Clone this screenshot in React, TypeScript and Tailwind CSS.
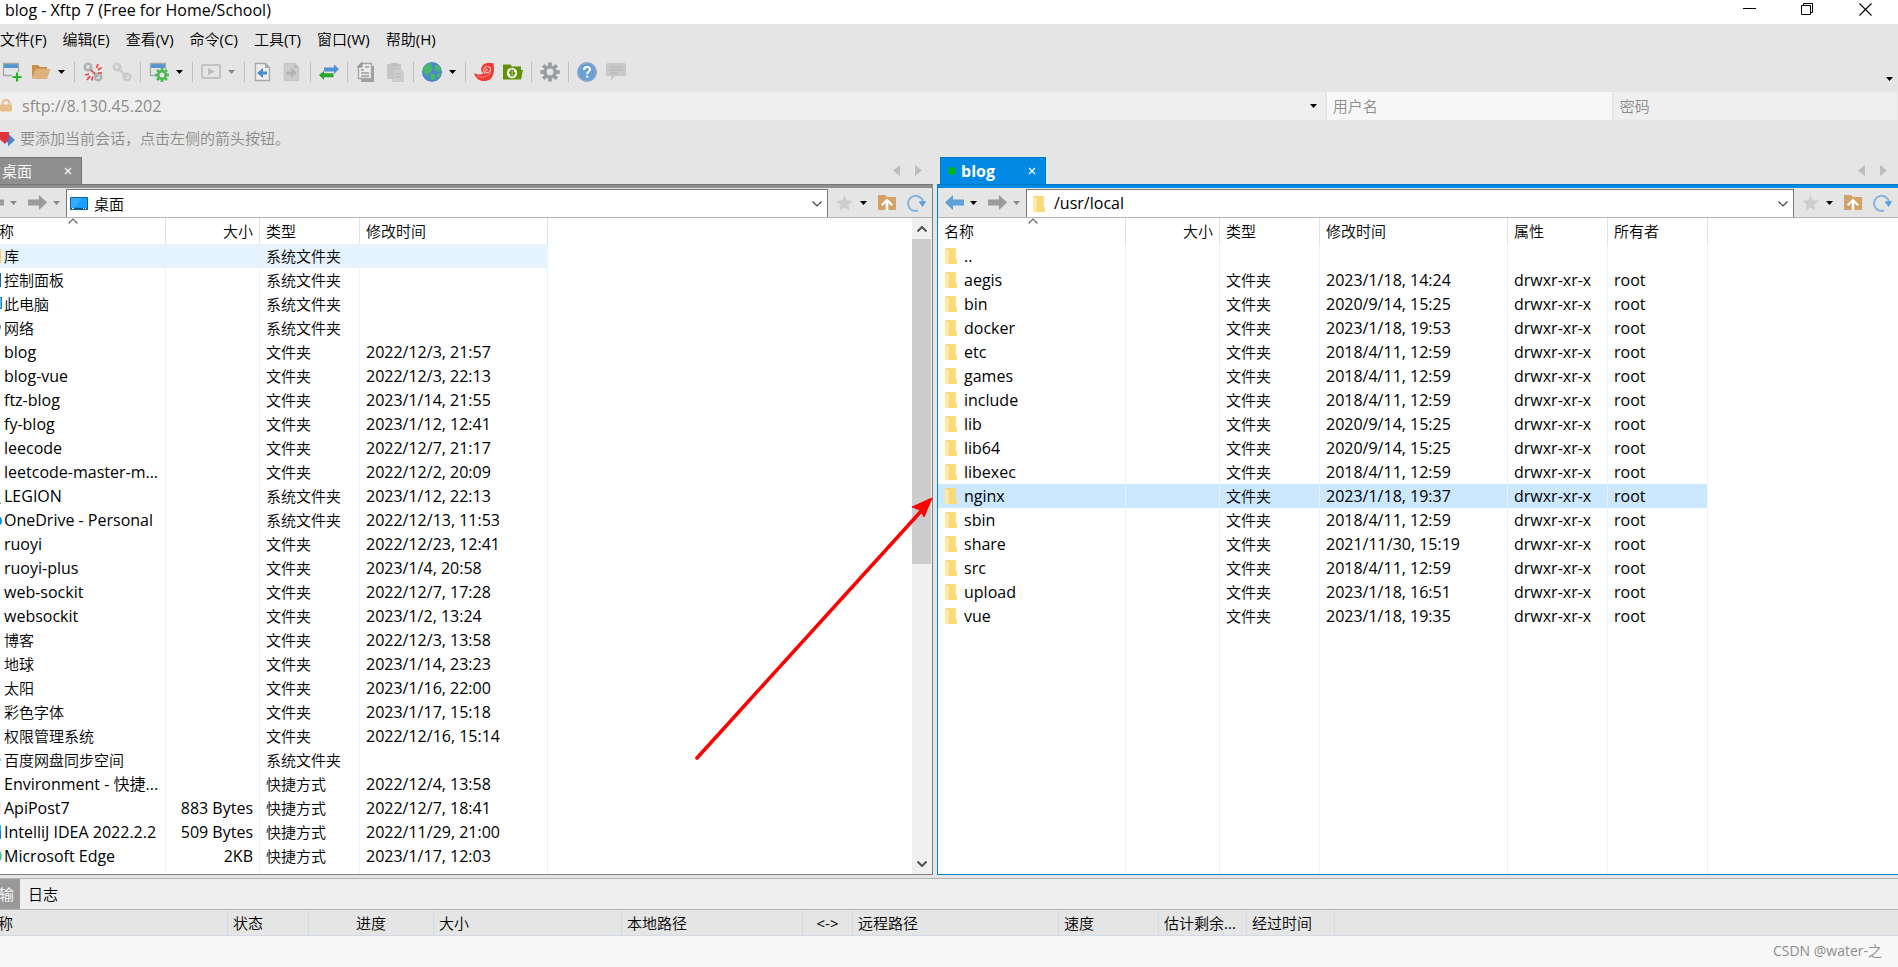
import type { ReactNode } from "react";

type Kind =
  | "folder" | "library" | "control" | "computer" | "network" | "user"
  | "cloud" | "disk" | "file" | "api" | "idea" | "edge";

type Entry = {
  name: string;
  kind?: Kind;
  size?: string;
  type?: string;
  time?: string;
  attr?: string;
  owner?: string;
};

const local: Entry[] = [
  { name: "库", kind: "library", type: "系统文件夹" },
  { name: "控制面板", kind: "control", type: "系统文件夹" },
  { name: "此电脑", kind: "computer", type: "系统文件夹" },
  { name: "网络", kind: "network", type: "系统文件夹" },
  { name: "blog", type: "文件夹", time: "2022/12/3, 21:57" },
  { name: "blog-vue", type: "文件夹", time: "2022/12/3, 22:13" },
  { name: "ftz-blog", type: "文件夹", time: "2023/1/14, 21:55" },
  { name: "fy-blog", type: "文件夹", time: "2023/1/12, 12:41" },
  { name: "leecode", type: "文件夹", time: "2022/12/7, 21:17" },
  { name: "leetcode-master-m...", type: "文件夹", time: "2022/12/2, 20:09" },
  { name: "LEGION", kind: "user", type: "系统文件夹", time: "2023/1/12, 22:13" },
  { name: "OneDrive - Personal", kind: "cloud", type: "系统文件夹", time: "2022/12/13, 11:53" },
  { name: "ruoyi", type: "文件夹", time: "2022/12/23, 12:41" },
  { name: "ruoyi-plus", type: "文件夹", time: "2023/1/4, 20:58" },
  { name: "web-sockit", type: "文件夹", time: "2022/12/7, 17:28" },
  { name: "websockit", type: "文件夹", time: "2023/1/2, 13:24" },
  { name: "博客", type: "文件夹", time: "2022/12/3, 13:58" },
  { name: "地球", type: "文件夹", time: "2023/1/14, 23:23" },
  { name: "太阳", type: "文件夹", time: "2023/1/16, 22:00" },
  { name: "彩色字体", type: "文件夹", time: "2023/1/17, 15:18" },
  { name: "权限管理系统", type: "文件夹", time: "2022/12/16, 15:14" },
  { name: "百度网盘同步空间", kind: "disk", type: "系统文件夹" },
  { name: "Environment - 快捷...", kind: "file", type: "快捷方式", time: "2022/12/4, 13:58" },
  { name: "ApiPost7", kind: "api", size: "883 Bytes", type: "快捷方式", time: "2022/12/7, 18:41" },
  { name: "IntelliJ IDEA 2022.2.2", kind: "idea", size: "509 Bytes", type: "快捷方式", time: "2022/11/29, 21:00" },
  { name: "Microsoft Edge", kind: "edge", size: "2KB", type: "快捷方式", time: "2023/1/17, 12:03" },
];

const dir = (name: string, time: string): Entry => ({
  name, time, type: "文件夹", attr: "drwxr-xr-x", owner: "root",
});

const remote: Entry[] = [
  { name: ".." },
  dir("aegis", "2023/1/18, 14:24"),
  dir("bin", "2020/9/14, 15:25"),
  dir("docker", "2023/1/18, 19:53"),
  dir("etc", "2018/4/11, 12:59"),
  dir("games", "2018/4/11, 12:59"),
  dir("include", "2018/4/11, 12:59"),
  dir("lib", "2020/9/14, 15:25"),
  dir("lib64", "2020/9/14, 15:25"),
  dir("libexec", "2018/4/11, 12:59"),
  dir("nginx", "2023/1/18, 19:37"),
  dir("sbin", "2018/4/11, 12:59"),
  dir("share", "2021/11/30, 15:19"),
  dir("src", "2018/4/11, 12:59"),
  dir("upload", "2023/1/18, 16:51"),
  dir("vue", "2023/1/18, 19:35"),
];

const hasHan = (s: string) => /^[\u4e00-\u9fff]+$/.test(s);
const textSize = (s: string) => (hasHan(s) ? "text-[15px]" : "text-[16px]");

/* ---------- icons ---------- */

function Svg({ w = 20, h = 20, children }: { w?: number; h?: number; children: ReactNode }) {
  return (
    <svg width={w} height={h} viewBox={`0 0 ${w} ${h}`} fill="none" className="block shrink-0" aria-hidden="true">
      {children}
    </svg>
  );
}

const Caret = ({ color = "#000" }: { color?: string }) => (
  <Svg w={7} h={4}><path d="M0 0h7L3.5 4z" fill={color} /></Svg>
);

const FolderGlyph = () => (
  <>
    <path d="M3 2h10.500v11.500h1.500V18H3z" fill="#f6d274" />
    <path d="M7 2h6.500v11.500H15V18H7z" fill="#f9d978" />
    <path d="M3 2.500L6.800 4v13.500L5.500 19 3 17.500z" fill="#ffe9a6" />
  </>
);

function EntryIcon({ kind = "folder" }: { kind?: Kind }) {
  return (
    <Svg>
      {kind === "folder" && <FolderGlyph />}
      {kind === "library" && <><path d="M3 4h16v13H3z" fill="#ffcf48" /><path d="M3 14h15v3H3z" fill="#3b9be8" /></>}
      {kind === "control" && <><path d="M3 3h16v14H3z" fill="#1668a8" /><path d="M5 5h11v9H5z" fill="#6fc3f7" /></>}
      {kind === "computer" && <><path d="M2 3h18v12H2z" fill="#2c7fc4" /><path d="M3 4h16v10H3z" fill="#5bbcf5" /><path d="M7 17h8v1H7z" fill="#777" /></>}
      {kind === "network" && <><circle cx="14" cy="9" r="5" fill="#5f8a8f" /><path d="M3 5h10v8H3z" fill="#5bbcf5" /></>}
      {kind === "user" && <><circle cx="11" cy="7" r="4" fill="#7fb59a" /><path d="M3 18c2-8 14-8 16 0z" fill="#5b9c7c" /></>}
      {kind === "cloud" && <path d="M5 15a4 4 0 010-7 5 5 0 019-1 4 4 0 012 8z" fill="#1590df" stroke="#1590df" strokeWidth="2" />}
      {kind === "disk" && <><circle cx="7" cy="10" r="4" stroke="#2fb5f0" strokeWidth="3" /><path d="M11 10h8" stroke="#58d4e8" strokeWidth="2" /></>}
      {kind === "file" && <path d="M4.500 2.500h9v15h-9z" fill="#fff" stroke="#aaa" />}
      {kind === "api" && <rect x="2" y="2" width="17" height="16" rx="3" fill="#fde3da" />}
      {kind === "idea" && <><path d="M2 4h17v13H2z" fill="#087cfa" /><path d="M4 6h11v10H4z" fill="#111" /><path d="M17 3h2v5h-2z" fill="#21b8f0" /></>}
      {kind === "edge" && <><circle cx="11" cy="10" r="8.500" fill="#1f7fc9" /><path d="M11 2a8.500 8.500 0 018 11c-3 1-5-2-8-2z" fill="#54c95c" /></>}
    </Svg>
  );
}

const NewSession = () => (
  <Svg>
    <path d="M1 1h16v5H1z" fill="#5596d2" />
    <path d="M10 13.500H1.500v-12h15V10" stroke="#a5a9ac" strokeWidth="1.300" />
    <path d="M15 10.500v9M10.500 15h9" stroke="#28b428" strokeWidth="2.200" />
  </Svg>
);
const OpenFolder = () => (
  <Svg>
    <path d="M1 3h6l2 2h7v3H5l-4 8z" fill="#c98f4b" />
    <path d="M5 7h14.500L16 17H1z" fill="#dfb27c" />
  </Svg>
);
const LinkShape = ({ c }: { c: string }) => (
  <>
    <circle cx="5" cy="5" r="3.200" stroke={c} strokeWidth="2.600" />
    <circle cx="15" cy="15" r="3.200" stroke={c} strokeWidth="2.600" />
    <path d="M6 6l3 3M11 11l4 4" stroke={c} strokeWidth="3" />
  </>
);
const Disconnect = () => (
  <Svg>
    <LinkShape c="#b0b3b5" />
    <path d="M13.500 6l1.500-4M15 8l3.500-2.500M15 11h4M6 12l-4 1M7 14l-3 4M9.500 14.500l-.5 4M8 8l4 4" stroke="#ef4444" strokeWidth="1.700" />
  </Svg>
);
const Reconnect = () => (
  <Svg><LinkShape c="#cbcbcb" /><path d="M6 6l9 9" stroke="#cbcbcb" strokeWidth="2.400" /></Svg>
);
const Gear = ({ x, y, r, c, hole }: { x: number; y: number; r: number; c: string; hole: string }) => (
  <g>
    {[0, 45, 90, 135].map((a) => (
      <path key={a} d={`M${x - r} ${y}h${r * 2}`} stroke={c} strokeWidth={r / 2.6} transform={`rotate(${a} ${x} ${y})`} />
    ))}
    <circle cx={x} cy={y} r={r * 0.7} fill={c} />
    <circle cx={x} cy={y} r={r * 0.36} fill={hole} />
  </g>
);
const Properties = () => (
  <Svg>
    <path d="M1 1h16v5H1z" fill="#5596d2" />
    <path d="M8 13.500H1.500v-12h15V7" stroke="#a5a9ac" strokeWidth="1.300" />
    <Gear x={13} y={13} r={7} c="#4db84d" hole="#e5e5e5" />
  </Svg>
);
const Play = () => (
  <Svg><rect x="1" y="3" width="18" height="13" rx="1" stroke="#c3c3c3" strokeWidth="2" /><path d="M7 6l7 3.500L7 13z" fill="#bdbdbd" /></Svg>
);
const PageArrow = ({ left }: { left: boolean }) => (
  <Svg>
    <path d="M2.500 1.500h10l4 4v13h-14z" fill={left ? "#eeeeee" : "#cdcdcd"} stroke={left ? "#a7abae" : "#c6c6c6"} strokeWidth="1.400" />
    <path d="M12 1v5h5z" fill={left ? "#a7abae" : "#bdbdbd"} />
    {left
      ? <path d="M4 11l6-5v3.500h4v3h-4V16z" fill="#4c8bd0" />
      : <path d="M15 11l-6-5v3.500H4v3h5V16z" fill="#b3b3b3" />}
  </Svg>
);
const Swap = () => (
  <Svg>
    <path d="M20 7l-5-4.500v3H5v4h10v2.500z" fill="#4f92d6" />
    <path d="M0 13l5-4v2.300h9.500v4H5V18z" fill="#2ba52b" />
  </Svg>
);
const Copy = () => (
  <Svg>
    <path d="M6 4h12v16H5v-3h11V4z" fill="#9da2a8" />
    <path d="M5 1.500h10.500v15h-13V4z" fill="#ededed" stroke="#a2a6a9" strokeWidth="1.300" />
    <path d="M2 5l4-4v4zM5 8h3M5 11h8M5 14h8M9 5h4" fill="#999" stroke="#989b9e" strokeWidth="1.300" />
  </Svg>
);
const Paste = () => (
  <Svg>
    <path d="M2 2h14v15H2z" fill="#c6c6c6" /><path d="M6 1h6v3H6z" fill="#bbb" />
    <path d="M8 7h7l3 3v10H8z" fill="#cfcfcf" stroke="#c0c0c0" /><path d="M10 12h6M10 15h6" stroke="#b8b8b8" strokeWidth="1.200" />
  </Svg>
);
const Globe = () => (
  <Svg>
    <circle cx="10" cy="10" r="10" fill="#4d87cb" />
    <path d="M2 5l5-4 3 1-1 3 2 2-2 3-3 1 1 2-2 1-3-3-1-3z" fill="#45b963" />
    <path d="M13 3l4 1 2 4-3 2-3-2zM8 12l4 0 2 2-2 4-3 0z" fill="#45b963" />
    <path d="M16 11l3 0-2 5-2-2z" fill="#45b963" />
  </Svg>
);
const Shell = () => (
  <Svg>
    <path d="M0 11c4 2 7 2 9.500 0C7 10 6.500 7 8 4.500 10 1 15 0 19.500 1.500 20.500 8 20 13 17 16.500 11 21.500 2 19 0 11z" fill="#f4382f" />
    <path d="M13.800 8c-.8-1.200-2.500-.2-2.200 1.200.5 2.500 5 1.500 5-2 0-2.500-3.500-3.700-5.700-1.500-2 2-1.500 5 .5 6" stroke="#fbd4d0" strokeWidth="1.100" />
    <path d="M3 14c5 2 10 1 14-3" stroke="#fbb5b0" strokeWidth=".8" />
  </Svg>
);
const XftpFolder = () => (
  <Svg>
    <path d="M0 2.500h7.500l1.500 2h9V8h2l-2 9.500H0z" fill="#5f9208" />
    <circle cx="9" cy="11" r="5.200" fill="#fff" />
    <path d="M8 14.500V9l-1.800 2.500M10.200 7.500V13l1.800-2.500" stroke="#5f9208" strokeWidth="1.700" />
  </Svg>
);
const Help = () => (
  <Svg>
    <circle cx="10" cy="10" r="9.300" fill="#6b9fd6" stroke="#85a9cf" strokeWidth="1.400" />
    <path d="M7 8c0-4 6-4 6-.5 0 2-2.800 2-2.800 4.500M10.200 13.500v2.200" stroke="#fff" strokeWidth="2" />
  </Svg>
);
const Chat = () => (
  <Svg>
    <path d="M2 1h16a2 2 0 012 2v9a2 2 0 01-2 2H9l-4 5v-5H2a2 2 0 01-2-2V3a2 2 0 012-2z" fill="#c8c8c8" />
    <path d="M4 5h12M4 8h12M4 11h8" stroke="#bababa" strokeWidth="1.300" />
  </Svg>
);

const Arrow = ({ left, color }: { left?: boolean; color: string }) => (
  <Svg w={19} h={15}>
    {left
      ? <path d="M0 7.500L8 0v4.500h11v6H8V15z" fill={color} />
      : <path d="M19 7.500L11 0v4.500H0v6h11V15z" fill={color} />}
  </Svg>
);
const Star = () => (
  <Svg w={17} h={16}><path d="M8.500 0l2.300 5.300 6 .5-4.500 4 1.300 6-5.100-3.200-5.100 3.200 1.300-6-4.500-4 6-.5z" fill="#cdcdcd" /></Svg>
);
const UpFolder = () => (
  <Svg w={18} h={17}>
    <path d="M0 1h7l2 2h9v13H0z" fill="#d3a267" />
    <path d="M9 4.500l6 6-1.500 1.500L10.300 9v7H7.700V9l-3.200 3L3 10.500z" fill="#fff" />
  </Svg>
);
const Refresh = () => (
  <Svg w={19} h={18}>
    <path d="M11 16.500A7.500 7.500 0 1116 8" stroke="#86b4dd" strokeWidth="2" />
    <path d="M12 7.500l7 0-3.300 5z" fill="#5b9fdc" />
    <path d="M12 8l3.500 5 3.500-6z" fill="#5b9fdc" />
  </Svg>
);
const Chevron = ({ up, size = 10, color = "#444", weight = 1.2 }: { up?: boolean; size?: number; color?: string; weight?: number }) => (
  <svg width={size} height={size * 0.6} viewBox="0 0 10 6" fill="none" className="block" aria-hidden="true">
    <path d={up ? "M.5 5.500L5 1l4.500 4.500" : "M.5.500L5 5 9.500.500"} stroke={color} strokeWidth={weight} />
  </svg>
);
const Monitor = () => (
  <Svg w={18} h={13}>
    <path d="M.5.500h17v12H.5z" fill="#1a9fff" stroke="#0b63a5" />
    <path d="M1 1h12L4 11H1z" fill="#36acff" />
    <path d="M1 11.500h16" stroke="#0b4f88" strokeWidth="1.200" /><path d="M2 11.500h2M13 11.500h1M15 11.500h1" stroke="#fff" />
  </Svg>
);

/* ---------- toolbar ---------- */

function Tool({ label, menu, muted, children }: { label: string; menu?: boolean; muted?: boolean; children: ReactNode }) {
  return (
    <button
      aria-label={label}
      className={menu ? "flex h-7 w-11 shrink-0 items-center gap-[7px] pl-[5px]" : "flex h-7 w-[29px] shrink-0 items-center justify-center"}
    >
      {children}
      {menu && <Caret color={muted ? "#8a8a8a" : "#000"} />}
    </button>
  );
}
const Sep = () => (
  <span className="flex w-2 shrink-0 justify-center"><span className="h-5 w-px bg-[#bfbfbf]" /></span>
);

function Toolbar() {
  return (
    <div className="flex h-[35px] items-center pr-[5px] pb-[5px]">
      <div className="-ml-[3px] flex flex-1 items-center">
        <Tool label="新建"><NewSession /></Tool>
        <Tool label="打开" menu><OpenFolder /></Tool>
        <Sep />
        <Tool label="断开"><Disconnect /></Tool>
        <Tool label="重新连接"><Reconnect /></Tool>
        <Sep />
        <Tool label="属性" menu><Properties /></Tool>
        <Sep />
        <Tool label="运行" menu muted><Play /></Tool>
        <Sep />
        <Tool label="下载"><PageArrow left /></Tool>
        <Tool label="上传"><PageArrow left={false} /></Tool>
        <Sep />
        <Tool label="同步"><Swap /></Tool>
        <Sep />
        <Tool label="复制"><Copy /></Tool>
        <Tool label="粘贴"><Paste /></Tool>
        <Sep />
        <Tool label="编码" menu><Globe /></Tool>
        <Sep />
        <Tool label="Xshell"><Shell /></Tool>
        <Tool label="Xftp"><XftpFolder /></Tool>
        <Sep />
        <Tool label="选项"><Svg><Gear x={10} y={10} r={9.6} c="#9a9da0" hole="#e5e5e5" /></Svg></Tool>
        <Sep />
        <Tool label="帮助"><Help /></Tool>
        <Tool label="反馈"><Chat /></Tool>
      </div>
      <button aria-label="更多工具" className="self-end pb-[6px]"><Caret /></button>
    </div>
  );
}

/* ---------- file panel ---------- */

const headings = ["名称", "大小", "类型", "修改时间", "属性", "所有者"];
const colWidths = ["w-[188px]", "w-[94px]", "w-[100px]", "w-[188px]", "w-[100px]", "w-[100px]"];

function FileTable({ rows, columns, selected, selectedClass }: { rows: Entry[]; columns: number; selected: number; selectedClass: string }) {
  const cell = "border-r border-[#e8f2fb] p-0 whitespace-nowrap";
  const cols = headings.slice(0, columns);
  return (
    <table className={`h-full table-fixed border-separate border-spacing-0 ${columns === 4 ? "w-[570px]" : "w-[770px]"}`}>
      <colgroup>
        {cols.map((h, i) => <col key={h} className={colWidths[i]} />)}
      </colgroup>
      <thead>
        <tr className="h-[26px]">
          {cols.map((h, i) => (
            <th
              key={h}
              scope="col"
              className={`relative border-r border-[#e2e2e2] px-[6px] text-[15px] font-normal ${i === 1 ? "text-right" : "text-left"}`}
            >
              {i === 0 && <span className="absolute top-0 left-[90px]"><Chevron up color="#666" /></span>}
              {h}
            </th>
          ))}
        </tr>
      </thead>
      <tbody>
        {rows.map((r, n) => (
          <tr key={r.name} className={n === selected ? `h-6 ${selectedClass}` : "h-6"}>
            <td className={`${cell} ${textSize(r.name)}`}>
              <span className="flex h-6 items-center gap-[2px] pl-1 leading-6">
                <EntryIcon kind={r.kind} />{r.name}
              </span>
            </td>
            {[r.size, r.type, r.time, r.attr, r.owner].slice(0, columns - 1).map((v, i) => (
              <td key={i} className={`${cell} px-[6px] leading-6 ${i === 0 ? "text-right" : ""} ${textSize(v ?? "")}`}>{v}</td>
            ))}
          </tr>
        ))}
        <tr>
          {cols.map((h) => <td key={h} className={cell} />)}
        </tr>
      </tbody>
    </table>
  );
}

function PanelTabs({ title, active }: { title: string; active: boolean }) {
  return (
    <div className="flex h-[27px] items-center pl-[3px]">
      <div
        className={
          active
            ? "flex h-full w-[106px] items-center border-x border-t border-[#0078c8] bg-[#008ae6] pr-[9px] pl-[7px] text-white"
            : "flex h-full w-[101px] items-center border-x border-t border-[#777] bg-[#8f8f8f] pr-[9px] pl-[7px] text-white"
        }
      >
        <span className={active ? "size-2 rounded-full bg-[#00b41e]" : "size-2"} />
        <button className={active ? "flex-1 pl-[5px] text-left text-[16px] leading-6 font-bold" : "flex-1 pl-[5px] text-left text-[15px] leading-6"}>{title}</button>
        <button aria-label={`关闭 ${title}`}>
          <Svg w={8} h={8}><path d="M1 1l6 6M7 1L1 7" stroke="#fff" strokeWidth="1.100" /></Svg>
        </button>
      </div>
      <div className="ml-auto flex items-center gap-[15px] pr-[11px]">
        <button aria-label="上一个标签"><Svg w={7} h={11}><path d="M7 0v11L0 5.500z" fill="#bdbdbd" /></Svg></button>
        <button aria-label="下一个标签"><Svg w={7} h={11}><path d="M0 0v11l7-5.500z" fill="#bdbdbd" /></Svg></button>
      </div>
    </div>
  );
}

function PathBar({ path, label, icon, back }: { path: string; label: string; icon: ReactNode; back: string }) {
  return (
    <div className="flex h-[30px] items-center border-b border-[#b4b4b4] bg-[#e5e5e5] pr-[6px] pl-[7px]">
      <div className="flex w-[81px] shrink-0 items-center gap-[6px]">
        <button aria-label={`${label}后退`}><Arrow left color={back} /></button>
        <button aria-label={`${label}后退历史`}><Caret color={back === "#5f9fd8" ? "#000" : "#8a8a8a"} /></button>
        <button aria-label={`${label}前进`} className="pl-[5px]"><Arrow color="#9c9c9c" /></button>
        <button aria-label={`${label}前进历史`}><Caret color="#8a8a8a" /></button>
      </div>
      <div className="mt-px flex h-7 flex-1 items-center self-start border-x border-t border-[#777] bg-white pr-[5px] pl-[3px]">
        <span className="flex w-6 shrink-0 items-center">{icon}</span>
        <input
          aria-label={label}
          defaultValue={path}
          className={`h-6 min-w-0 flex-1 bg-transparent pb-px outline-none ${textSize(path)}`}
        />
        <button aria-label={`${label}列表`}><Chevron /></button>
      </div>
      <div className="flex shrink-0 items-center pl-2">
        <button aria-label={`${label}收藏`}><Star /></button>
        <button aria-label={`${label}收藏列表`} className="pl-[7px]"><Caret /></button>
        <button aria-label={`${label}上级目录`} className="pl-[11px]"><UpFolder /></button>
        <button aria-label={`${label}刷新`} className="pl-[11px]"><Refresh /></button>
      </div>
    </div>
  );
}

/* ---------- transfer queue ---------- */

const queue: { title: string; className: string }[] = [
  { title: "名称", className: "w-[250px] text-left" },
  { title: "状态", className: "w-[81px] text-left" },
  { title: "进度", className: "w-[125px] text-center" },
  { title: "大小", className: "w-[188px] text-left" },
  { title: "本地路径", className: "w-[181px] text-left" },
  { title: "<->", className: "w-[50px] text-center" },
  { title: "远程路径", className: "w-[206px] text-left" },
  { title: "速度", className: "w-[100px] text-left" },
  { title: "估计剩余...", className: "w-[88px] text-left" },
  { title: "经过时间", className: "w-[88px] text-left" },
];

const menus = ["文件(F)", "编辑(E)", "查看(V)", "命令(C)", "工具(T)", "窗口(W)", "帮助(H)"];

export default function App() {
  return (
    <div className="flex h-screen min-h-[640px] flex-col overflow-hidden bg-[#e5e5e5] font-['Open_Sans','Noto_Sans_CJK_SC_DemiLight','Noto_Sans_CJK_SC_Light','Noto_Sans_CJK_SC',sans-serif] text-black">
      <header className="flex h-6 shrink-0 items-start bg-white pr-[26px] pl-[5px]">
        <h1 className="flex-1 text-[16px] leading-5">blog - Xftp 7 (Free for Home/School)</h1>
        <div className="flex gap-[45px] pt-[3px]">
          <button aria-label="最小化"><Svg w={13} h={13}><path d="M0 5.500h13" stroke="#000" /></Svg></button>
          <button aria-label="还原"><Svg w={13} h={13}><path d="M.5 2.500h9v9h-9zM2.500 2.500v-2h9v9h-2" stroke="#000" /></Svg></button>
          <button aria-label="关闭"><Svg w={13} h={13}><path d="M.5.500l12 12M12.500.500l-12 12" stroke="#000" strokeWidth="1.100" /></Svg></button>
        </div>
      </header>

      <nav className="flex h-[33px] shrink-0 items-center gap-4 pb-[2px] text-[15px]">
        {menus.map((m) => <button key={m}>{m}</button>)}
      </nav>

      <Toolbar />

      <div className="grid h-7 shrink-0 grid-cols-[minmax(0,1324fr)_minmax(0,285fr)_minmax(0,283fr)] gap-[2px] pr-px text-[#8c8c8c]">
        <div className="flex items-center bg-[#efefef] pr-2">
          <Svg w={12} h={14}>
            <path d="M2.500 7V4.500a3.500 3.500 0 017 0V7" stroke="#e6be8b" strokeWidth="2" />
            <rect x="0" y="5.500" width="12" height="7" rx="1" fill="#e6be8b" />
          </Svg>
          <input aria-label="主机地址" defaultValue="sftp://8.130.45.202" className="ml-[10px] min-w-0 flex-1 bg-transparent text-[16px] outline-none" />
          <button aria-label="主机列表"><Caret /></button>
        </div>
        <input aria-label="用户名" placeholder="用户名" className="bg-[#f7f7f7] px-[6px] text-[15px] outline-none placeholder:text-[#8c8c8c]" />
        <input aria-label="密码" type="password" placeholder="密码" className="bg-[#efefef] px-[6px] text-[15px] outline-none placeholder:text-[#8c8c8c]" />
      </div>

      <div className="flex h-[37px] shrink-0 items-center gap-[5px] text-[15px] text-[#8c8c8c]">
        <Svg w={15} h={18}>
          <path d="M4 7.500h4V3.500l7 6.500-7 6.500v-4H4z" fill="#4a86cb" />
          <path d="M0 2h9v7L5 13.500 0 16z" fill="#e2333b" />
          <path d="M0 9.500L4 13v5H0z" fill="#e5e5e5" />
        </Svg>
        <p>要添加当前会话，点击左侧的箭头按钮。</p>
      </div>

      <main className="relative flex min-h-0 flex-1 gap-1">
        <section aria-label="本地文件" className="relative flex min-w-0 flex-[933] flex-col overflow-hidden">
          <div className="-ml-[22px] flex min-h-0 flex-1 flex-col">
            <PanelTabs title="桌面" active={false} />
            <div className="border-t border-[#777] bg-[#8f8f8f] pt-[3px]" />
            <div className="flex min-h-0 flex-1 flex-col border-r border-b border-[#808080]">
              <PathBar path="桌面" label="本地路径" icon={<Monitor />} back="#9c9c9c" />
              <div className="flex min-h-0 flex-1 bg-white">
                <div className="min-w-0 flex-1 overflow-hidden">
                  <FileTable rows={local} columns={4} selected={0} selectedClass="bg-[#e5f3ff]" />
                </div>
                <div className="flex w-5 shrink-0 flex-col bg-[#f0f0f0] pr-px">
                  <button aria-label="向上滚动" className="flex h-[21px] items-center justify-center"><Chevron up color="#505050" weight={2} /></button>
                  <div className="min-h-0 flex-1"><div className="h-[53%] bg-[#cdcdcd]" /></div>
                  <button aria-label="向下滚动" className="flex h-[21px] items-center justify-center"><Chevron color="#505050" weight={2} /></button>
                </div>
              </div>
            </div>
          </div>
          <svg className="pointer-events-none absolute top-[340px] right-0 h-[264px] w-[240px]" viewBox="0 0 240 264" aria-hidden="true">
            <path d="M4 261L230 12" stroke="#ff0000" strokeWidth="3.600" strokeLinecap="round" />
            <path d="M239 1l-8 19-4-7-8-3z" fill="#ff0000" stroke="#ff0000" />
          </svg>
        </section>

        <section aria-label="远程文件" className="flex min-w-0 flex-[961] flex-col">
          <PanelTabs title="blog" active />
          <div className="border-t border-[#0078c8] bg-[#008ae6] pt-[3px]" />
          <div className="flex min-h-0 flex-1 flex-col border-b border-l border-[#0083d6]">
            <PathBar path="/usr/local" label="远程路径" icon={<Svg><FolderGlyph /></Svg>} back="#5f9fd8" />
            <div className="min-h-0 flex-1 overflow-hidden bg-white">
              <FileTable rows={remote} columns={6} selected={10} selectedClass="bg-[#cce8ff]" />
            </div>
          </div>
        </section>
      </main>

      <footer className="mt-[3px] shrink-0 border-t border-[#b4b4b4] bg-[#f7f7f7]">
        <div className="flex h-[30px] bg-[#efefef] text-[15px]">
          <button className="-ml-[22px] w-[42px] bg-[#999] text-white">传输</button>
          <button className="px-2">日志</button>
        </div>
        <div className="h-[27px] border-y border-t-[#b4b4b4] border-b-[#d3dae4] bg-[#e5e5e5]">
          <table className="-ml-[22px] h-full w-[1357px] table-fixed border-separate border-spacing-0 text-[15px] leading-5">
            <thead>
              <tr>
                {queue.map((q) => (
                  <th key={q.title} scope="col" className={`border-r border-[#d0dcea] px-[5px] py-0 font-normal whitespace-nowrap ${q.className}`}>{q.title}</th>
                ))}
              </tr>
            </thead>
          </table>
        </div>
        <p className="h-[31px] pr-4 text-right text-[14px] leading-[30px] text-[#8c8c8c]">CSDN @water-之</p>
      </footer>
    </div>
  );
}
